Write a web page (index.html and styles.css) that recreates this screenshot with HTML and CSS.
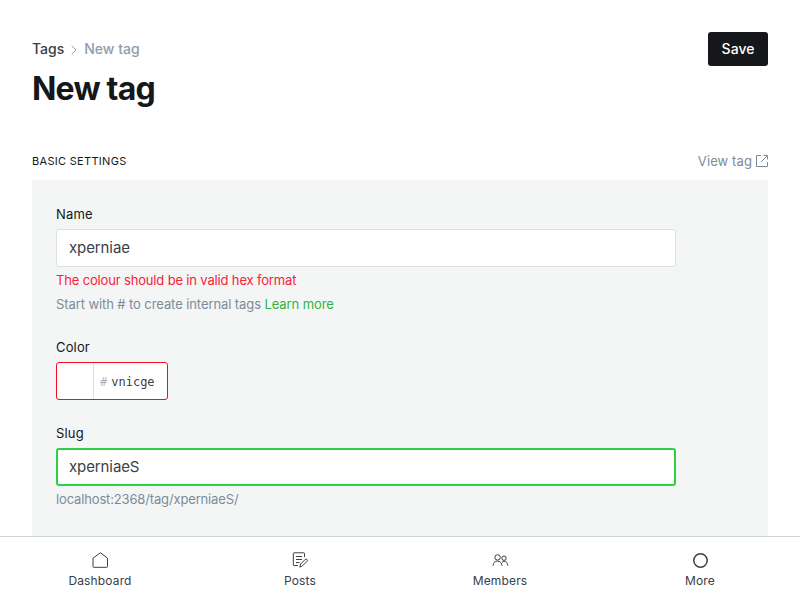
FILE: index.html
```html
<!DOCTYPE html>
<html lang="en">
<head>
<meta charset="utf-8">
<title>New tag</title>
<link rel="stylesheet" href="styles.css">
</head>
<body>
<main class="content">
  <header class="page-header">
    <div>
      <nav class="breadcrumb">
        <a class="crumb-link">Tags</a>
        <svg class="chevron" viewBox="0 0 6 10"><path d="M.7.8 5 5 .7 9.2"/></svg>
        <span>New tag</span>
      </nav>
      <h1>New tag</h1>
    </div>
    <button class="save">Save</button>
  </header>
  <div class="section-head">
    <h2>Basic settings</h2>
    <a class="view-link">View tag
      <svg viewBox="0 0 12 12"><path d="M5 .5H.5v11h11V7M7.500.500h4v4M11.500.500l-6.500 6.500"/></svg>
    </a>
  </div>
  <form class="panel">
    <div class="field name-field">
      <label>Name</label>
      <div class="input">xperniae</div>
      <p class="error">The colour should be in valid hex format</p>
      <p class="hint">Start with # to create internal tags <a>Learn more</a></p>
    </div>
    <div class="field color-field">
      <label>Color</label>
      <div class="color-input">
        <span class="swatch"></span>
        <span class="hex"><span class="hash">#</span>vnicge</span>
      </div>
    </div>
    <div class="field">
      <label>Slug</label>
      <div class="input focused">xperniaeS</div>
      <p class="hint slug-hint">localhost:2368/tag/xperniaeS/</p>
    </div>
  </form>
</main>
<nav class="tabbar">
  <a class="tab">
    <svg viewBox="0 0 16 16"><path d="M1 6.200 8.500.7l7 5.500v8.300q0 .8-.8.8h-13q-.7 0-.7-.8z"/></svg>
    Dashboard
  </a>
  <a class="tab">
    <svg viewBox="0 0 16 16"><path d="M12.500 5V1.500q0-.7-.7-.7H2q-.7 0-.7.7v11.400q0 .7.700.7H6M4 4.500h6M4 7.500h6M4 10.500h3.500M7.800 15.200l.8-3.200 4.500-4.500q1-.8 1.900 0 .8.900 0 1.800l-4.500 4.500z"/></svg>
    Posts
  </a>
  <a class="tab">
    <svg viewBox="0 0 16 16"><circle cx="5.600" cy="5.400" r="2.700"/><circle cx="12" cy="6.200" r="2.200"/><path d="M1.100 13.700c0-6.200 8.700-6.200 8.900 0M10 10.400c2.500-2.400 5.700-.7 5.700 3.300"/></svg>
    Members
  </a>
  <a class="tab">
    <svg class="more-icon" viewBox="0 0 16 16"><circle cx="8.500" cy="8.500" r="6.700"/></svg>
    More
  </a>
</nav>
</body>
</html>
```
FILE: styles.css
```css
* {
  box-sizing: border-box;
}

body {
  margin: 0;
  height: 600px;
  overflow: hidden;
  display: flex;
  flex-direction: column;
  background: #fff;
  color: #15171a;
  font: 400 13px/20px Inter, sans-serif;
}

h1, h2, p {
  margin: 0;
}

svg {
  fill: none;
  stroke: currentColor;
}

.content {
  flex: 1;
  min-height: 0;
  overflow: hidden;
  padding: 32px 32px 0;
}

.page-header {
  display: flex;
  justify-content: space-between;
  align-items: flex-start;
  height: 118px;
}

.breadcrumb {
  display: flex;
  align-items: center;
  height: 34px;
  font-size: 14px;
  font-weight: 500;
  color: #8e9cac;
}

.crumb-link {
  color: #394047;
}

.chevron {
  width: 6px;
  height: 10px;
  margin: 1px 7px 0 7px;
}

h1 {
  margin-top: 3px;
  font-size: 32px;
  line-height: 40px;
  font-weight: 700;
  letter-spacing: -0.8px;
}

.save {
  width: 60px;
  height: 34px;
  padding: 0;
  border: 0;
  border-radius: 3px;
  background: #15171a;
  color: #fff;
  font: 500 14px/34px Inter, sans-serif;
}

.section-head {
  display: flex;
  justify-content: space-between;
  height: 30px;
}

h2 {
  font-size: 11px;
  line-height: 22px;
  font-weight: 400;
  letter-spacing: 0.3px;
  text-transform: uppercase;
}

.view-link {
  display: flex;
  align-items: center;
  gap: 4px;
  height: 21px;
  font-size: 13px;
  letter-spacing: 0.1px;
  color: #7c8b9a;
}

.view-link svg {
  width: 12px;
  height: 12px;
}

.panel {
  height: 420px;
  padding: 24px;
  border-radius: 3px 3px 0 0;
  background: #f4f6f6;
}

.field {
  width: 620px;
}

.name-field {
  height: 133px;
}

.color-field {
  height: 86px;
}

label {
  display: block;
  height: 25px;
  line-height: 21px;
  letter-spacing: 0.15px;
}

.input {
  height: 38px;
  padding: 0 12px;
  border: 1px solid #dde1e5;
  border-radius: 3px;
  background: #fff;
  color: #394047;
  font-size: 15px;
  letter-spacing: -0.1px;
  line-height: 36px;
}

.focused {
  padding: 0 11px;
  border: 2px solid #30cf43;
  line-height: 34px;
}

.error {
  margin-top: 3px;
  letter-spacing: -0.16px;
  color: #f8203a;
}

.hint {
  margin-top: 4px;
  letter-spacing: -0.09px;
  color: #7c8b9a;
}

.slug-hint {
  margin-top: 3px;
  letter-spacing: -0.15px;
}

.hint a {
  color: #30b43f;
}

.color-input {
  display: flex;
  width: 112px;
  height: 38px;
  border: 1px solid #f50b23;
  border-radius: 3px;
  background: #fff;
}

.swatch {
  width: 37px;
  border-right: 1px solid #dde1e5;
}

.hex {
  padding-left: 6px;
  color: #394047;
  font: 12px/38px "DejaVu Sans Mono", monospace;
}

.hash {
  margin-right: 4px;
  color: #abb4be;
}

.tabbar {
  display: flex;
  height: 64px;
  border-top: 1px solid #ced4d9;
  background: #fff;
}

.tab {
  flex: 1;
  display: flex;
  flex-direction: column;
  align-items: center;
  padding-top: 15px;
  color: #394047;
  font-size: 12px;
  line-height: 16px;
  letter-spacing: 0.15px;
}

.tab svg {
  width: 16px;
  height: 16px;
  margin-bottom: 5px;
  overflow: visible;
}

.tab .more-icon {
  stroke-width: 1.5;
}
```
